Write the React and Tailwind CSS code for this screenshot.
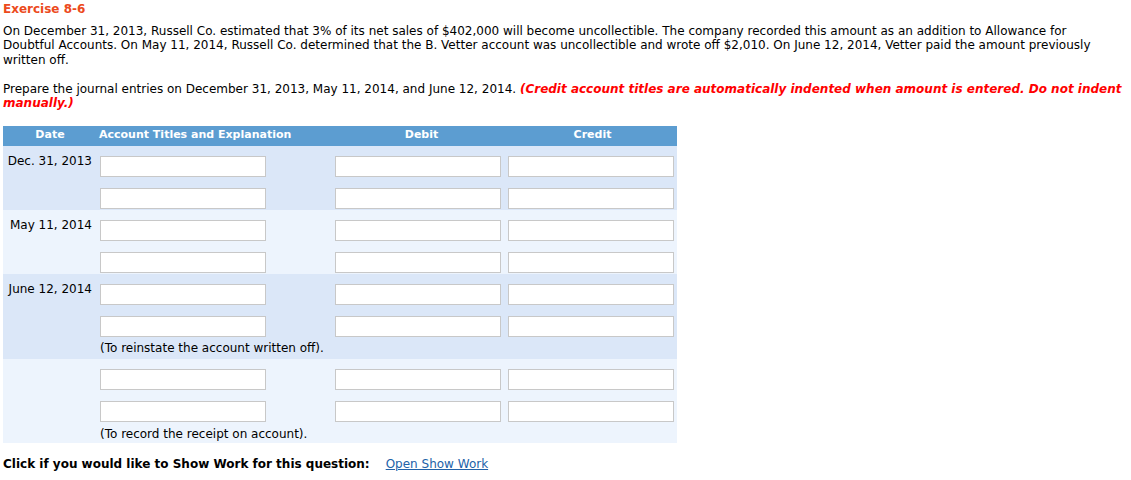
import React from "react";

const inputCls = "block h-[21px] w-[166px] border border-[#c8c8c8] bg-white";

function Row() {
  return (
    <div className="flex h-[32px] items-start pt-[10px]">
      <div className={inputCls} />
      <div className={inputCls + " ml-[69px]"} />
      <div className={inputCls + " ml-[7px]"} />
    </div>
  );
}

function Group({ date, bg, note, noteCls }) {
  return (
    <div className={"flex " + bg}>
      <div className="w-[97px] shrink-0 pr-[8px] pt-[8px] text-right leading-[14.5px]">{date}</div>
      <div className="flex flex-col">
        <Row />
        <Row />
        {note && <div className={noteCls + " leading-[14.5px]"}>{note}</div>}
      </div>
    </div>
  );
}

export default function App() {
  return (
    <div
      className="w-[1131px] bg-white pl-[3px] pt-[2px] text-[12px] leading-[14.5px] text-black"
      style={{ fontFamily: '"DejaVu Sans", Verdana, sans-serif' }}
    >
      <div className="font-bold text-[#ec4a1c]">Exercise 8-6</div>
      <p className="mt-[7px]">
        On December 31, 2013, Russell Co. estimated that 3% of its net sales of $402,000 will become uncollectible. The company recorded this amount as an addition to Allowance for
        <br />
        Doubtful Accounts. On May 11, 2014, Russell Co. determined that the B. Vetter account was uncollectible and wrote off $2,010. On June 12, 2014, Vetter paid the amount previously
        <br />
        written off.
      </p>
      <div className="mt-[14.5px]">
        <div className="flex whitespace-nowrap">
          <span>Prepare the journal entries on December 31, 2013, May 11, 2014, and June 12, 2014.&nbsp;</span>
          <span className="font-bold italic text-[#ff0000]">
            (Credit account titles are automatically indented when amount is entered. Do not indent
          </span>
        </div>
        <div className="font-bold italic text-[#ff0000]">manually.)</div>
      </div>

      <div className="mt-[15px] w-[674px]">
        <div className="flex h-[20px] items-center bg-[#5c9dd1] text-[11px] font-bold text-white">
          <div className="w-[94px] text-center">Date</div>
          <div className="w-[238px] pl-[2px]">Account Titles and Explanation</div>
          <div className="w-[173px] text-center">Debit</div>
          <div className="w-[169px] text-center">Credit</div>
        </div>
        <Group date="Dec. 31, 2013" bg="bg-[#dbe7f8]" />
        <Group date="May 11, 2014" bg="bg-[#edf4fd]" />
        <Group
          date="June 12, 2014"
          bg="bg-[#dbe7f8]"
          note="(To reinstate the account written off)."
          noteCls="h-[21px] pt-[3px]"
        />
        <Group
          date=""
          bg="bg-[#edf4fd]"
          note="(To record the receipt on account)."
          noteCls="h-[20px] pt-[4px]"
        />
      </div>

      <div className="mt-[14px] flex pb-[10px]">
        <span className="font-bold">Click if you would like to Show Work for this question:</span>
        <a href="#" className="ml-[16px] text-[#2262a8] underline">Open Show Work</a>
      </div>
    </div>
  );
}
